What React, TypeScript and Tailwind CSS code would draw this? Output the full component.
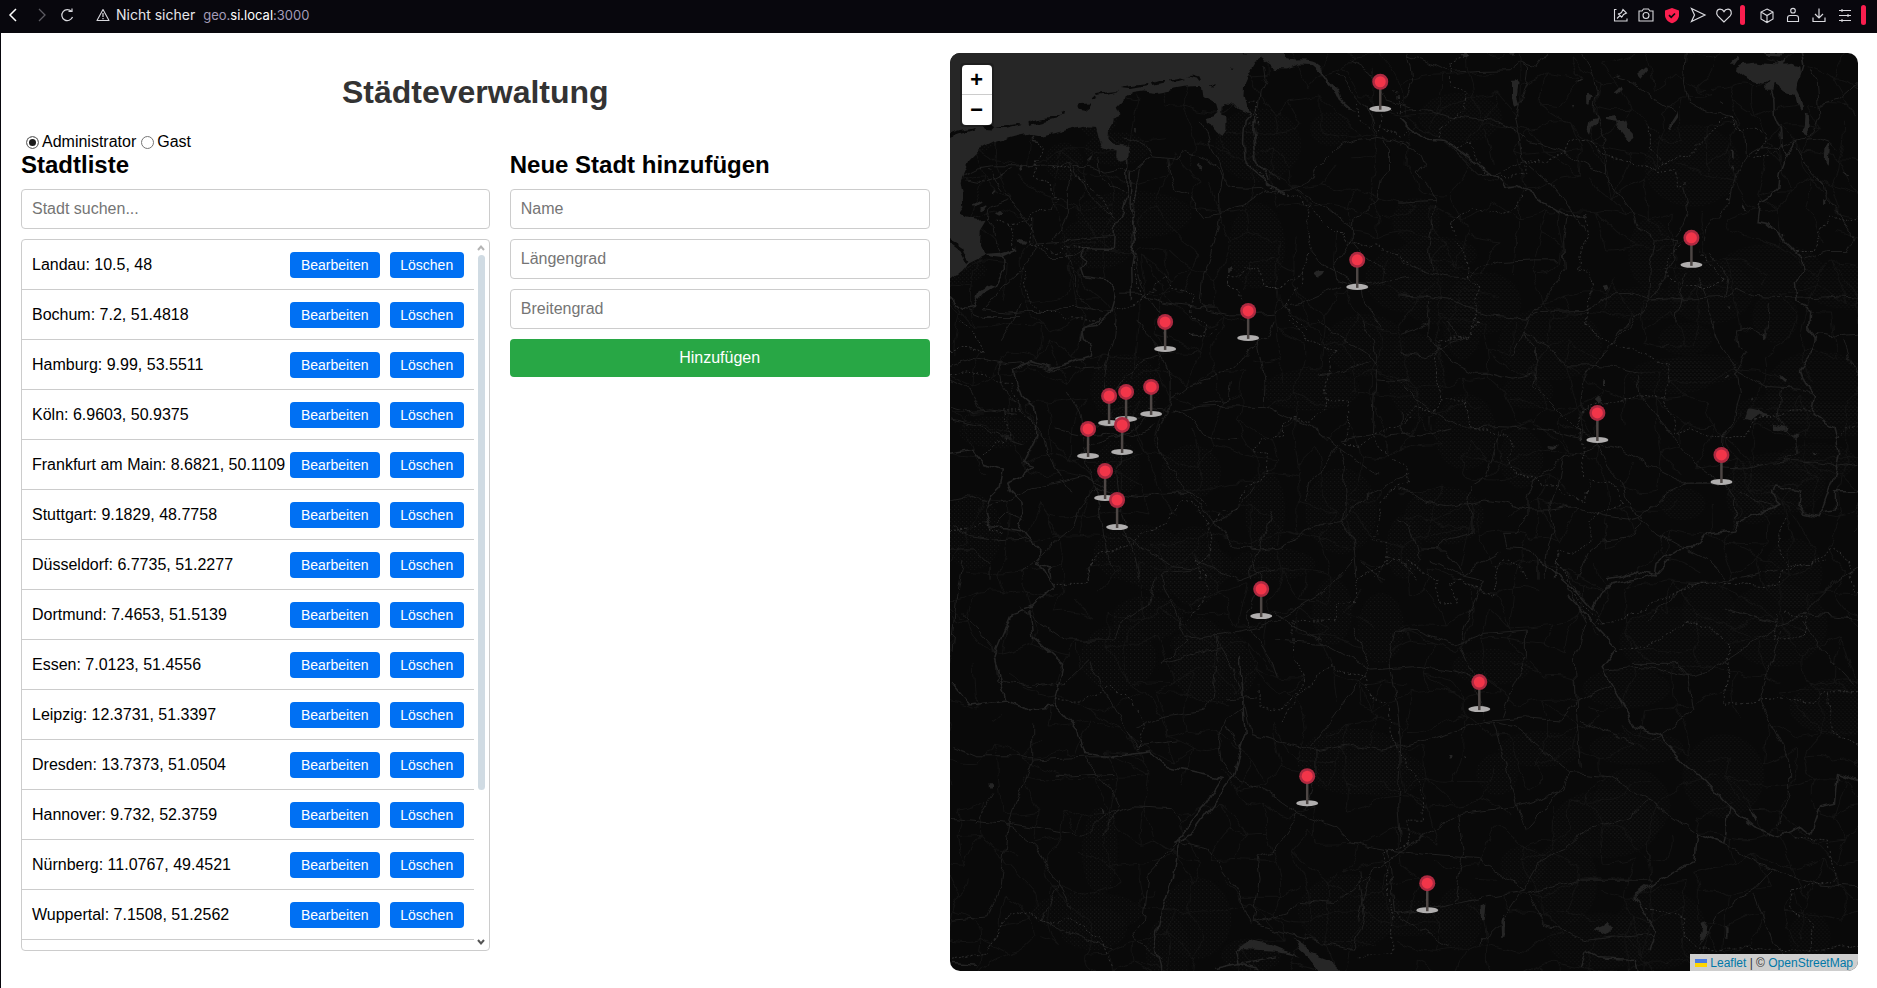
import React, { useState } from "react";

interface City {
  name: string;
  lng: number;
  lat: number;
}

const CITIES: City[] = [
  { name: "Landau", lng: 10.5, lat: 48 },
  { name: "Bochum", lng: 7.2, lat: 51.4818 },
  { name: "Hamburg", lng: 9.99, lat: 53.5511 },
  { name: "Köln", lng: 6.9603, lat: 50.9375 },
  { name: "Frankfurt am Main", lng: 8.6821, lat: 50.1109 },
  { name: "Stuttgart", lng: 9.1829, lat: 48.7758 },
  { name: "Düsseldorf", lng: 6.7735, lat: 51.2277 },
  { name: "Dortmund", lng: 7.4653, lat: 51.5139 },
  { name: "Essen", lng: 7.0123, lat: 51.4556 },
  { name: "Leipzig", lng: 12.3731, lat: 51.3397 },
  { name: "Dresden", lng: 13.7373, lat: 51.0504 },
  { name: "Hannover", lng: 9.732, lat: 52.3759 },
  { name: "Nürnberg", lng: 11.0767, lat: 49.4521 },
  { name: "Wuppertal", lng: 7.1508, lat: 51.2562 },
];

// Foot of every pin on the map canvas, north to south so that southern pins lie on top
const PINS: [number, number][] = [
  [430, 56],
  [741, 212],
  [407, 234],
  [298, 285],
  [215, 296],
  [201, 361],
  [176, 366],
  [159, 370],
  [647, 387],
  [172, 399],
  [138, 403],
  [771, 429],
  [155, 445],
  [167, 474],
  [311, 563],
  [529, 656],
  [357, 750],
  [477, 857],
];

// Small deterministic generator so the side roads are the same on every load
const createRandom = (seed: number) => {
  let state = seed;
  return () => {
    state = (state * 16807) % 2147483647;
    return state / 2147483647;
  };
};

const buildSideRoads = () => {
  const random = createRandom(4711);
  const step = 27;
  const cols = 36;
  const rows = 36;
  const nodes: number[][][] = [];
  for (let r = 0; r < rows; r++) {
    nodes.push([]);
    for (let c = 0; c < cols; c++) {
      nodes[r].push([(c + random() * 0.9 - 0.5) * step, (r + random() * 0.9 - 0.5) * step]);
    }
  }
  let d = "";
  const connect = (a: number[], b: number[]) => {
    const mx = (a[0] + b[0]) / 2 + (random() - 0.5) * 12;
    const my = (a[1] + b[1]) / 2 + (random() - 0.5) * 12;
    d += `M${a[0].toFixed(0)} ${a[1].toFixed(0)}Q${mx.toFixed(0)} ${my.toFixed(0)} ${b[0].toFixed(0)} ${b[1].toFixed(0)}`;
  };
  for (let r = 0; r < rows - 1; r++) {
    for (let c = 0; c < cols - 1; c++) {
      if (random() < 0.6) connect(nodes[r][c], nodes[r][c + 1]);
      if (random() < 0.6) connect(nodes[r][c], nodes[r + 1][c]);
      if (random() < 0.12) connect(nodes[r][c], nodes[r + 1][c + 1]);
    }
  }
  return d;
};

const buildForests = () => {
  const random = createRandom(99);
  return Array.from({ length: 90 }, () => ({
    cx: Math.round(random() * 908),
    cy: Math.round(60 + random() * 850),
    rx: Math.round(18 + random() * 40),
    ry: Math.round(14 + random() * 30),
  }));
};

const SIDE_ROADS = buildSideRoads();
const FORESTS = buildForests();

interface MapRegion {
  transform: string;
  water?: string;
  land?: string;
  roads: string;
  rivers: string;
  borders: string;
}

const REGIONS: MapRegion[] = [
  // north-west
  {
    transform: "translate(-10 -13) scale(.3333)",
    water:
      "M10 20H1027L1042 58L1075 62Q1120 60 1140 78L1165 120L1192 150L1200 180L1230 206L1256 213L1225 210L1195 182L1180 150L1160 125L1140 95L1118 76L1075 74L1040 86L1000 85L965 60L945 66L925 100L912 130L910 165L918 200L932 220L918 219L890 208L875 192L857 187L845 200L843 228L862 232V265L845 287L825 270L820 262L800 250L797 235L820 230L832 220L825 195L790 175L785 142L740 143L690 152L650 160L610 155L580 160L550 180L530 200L541 225L515 235L510 270L508 300L520 315L572 318L566 352L545 360L525 350L527 335L490 322L475 300L465 262L430 258L390 268L315 287L275 280L225 290L170 305L120 330L85 365L70 400L62 430L68 460L70 500L56 520L75 535L110 543L140 540L122 570L120 615L135 645L85 670L65 695L10 735ZM135 645L180 642L232 626L232 632L190 652L188 658L140 652ZM165 518L180 507L190 516L178 525ZM92 500L122 485L126 491L98 507ZM120 507L135 499L138 508L126 514ZM238 375H246L250 398L242 394ZM157 458L166 447L169 452L160 461ZM232 605L245 598L260 606L250 615L236 612ZM776 378L782 372L787 379L780 384ZM864 682L870 678L876 688L870 697L864 694ZM1127 708L1140 697L1155 699L1150 708L1136 717ZM106 772L112 755L150 733L165 738L125 762L114 775ZM438 360L448 350L450 354L441 364ZM582 265L587 264L587 279L583 277Z",
    land:
      "M10 302V288L60 274L105 265L100 271L60 283ZM125 260L145 255L160 262L150 272L132 271ZM165 264L230 253L245 255L200 266ZM265 251L280 242L330 235L362 230L350 238L300 250L268 259ZM360 220L372 216L370 228L362 228ZM410 193L425 190L455 188L450 198L435 210L415 206ZM455 175L465 170L475 178L465 181ZM468 163L500 157L535 153L500 163L470 169ZM542 145L575 138L620 133L625 138L570 148ZM632 128L655 121L680 121L675 128L650 132L635 136ZM690 119L720 113L735 118L715 124L692 125ZM738 106L760 105L778 110L783 122L778 124L770 113ZM812 140L824 136L820 144ZM870 86L880 87L876 91ZM910 43L918 45L914 48ZM20 590L60 610L72 640L88 660L80 668L62 632L20 600Z",
    roads:
      "M70 405L110 385L155 378L240 378L310 376L350 378L385 368L400 380L450 380L495 400L545 388L580 395M75 420L130 430L180 405L215 385M145 385L170 425L205 470L235 510L270 560L286 605L275 650L245 690L190 740L130 810M205 480L150 500L145 535L165 570L175 620L185 655M385 368L400 410L385 450L385 520L365 560L340 600M400 380L440 460L480 500L524 535M280 610L360 605L440 596L520 590M275 610L330 650L400 650L430 630M580 395L640 348L700 355L740 338L790 358L840 390L850 415L875 440L920 442L960 440M548 298L590 305L620 320L640 348M640 348L600 380L590 430L580 520L578 600L595 700L620 775M777 240L800 275L815 330L840 375L850 400L838 460L840 520L835 560L815 640L790 710L783 790L800 810M680 355L685 400L710 450L740 460L790 530L840 525L880 500L920 490L975 455L1040 445L1070 445L1110 425L1130 385L1185 330L1245 303L1310 293L1360 300L1410 320M1330 290L1345 330L1345 390L1320 420L1310 480L1270 520L1238 540L1236 600M1070 455L1120 480L1160 505L1210 545L1234 565M960 440L1000 460L1040 445M970 80L975 120L960 150L955 200L940 260L945 320L960 380L1020 420M1195 100L1240 160L1280 200L1300 250L1310 290M1230 60L1290 95L1340 180L1410 205M1234 605L1270 650L1310 670L1340 700M1110 635L1140 670L1190 700L1240 730L1290 735L1350 720L1410 712M800 810L870 825L930 825L1000 820L1040 800L1080 790L1150 760L1200 740M620 775L670 790L770 803L830 805M620 775L660 830L670 860L680 900M540 760L600 760L620 775M130 810L200 820L260 815L320 815L370 800L420 800L490 815L520 810M30 770L70 805L130 830L240 830M1236 600L1210 640L1180 680L1190 720L1240 735M1260 740L1270 790L1300 830L1330 870M240 790L220 840L180 900M380 640L400 700L410 760L460 810M470 350L475 400L510 440L560 455",
    rivers:
      "M566 352V380L560 400L562 470L545 520L524 550L520 632L430 630L425 650L440 662L422 685L430 710L500 720L520 745L525 770L515 805L500 830L465 860L430 865L420 900M574 395L570 500L585 600L572 680L574 780M932 220L915 240L910 300L915 370L960 410L1000 440L1040 455M940 225L938 280L950 360L990 420M188 658L190 690L165 740M30 770L70 805L100 800L112 770M277 285L280 305L297 308",
    borders:
      "M297 308L310 330L290 370L280 410L330 430L335 460L350 480L330 510L300 505L260 540L210 555L165 540M205 555L225 630M275 540L265 610L300 615L340 640L380 620L440 632M340 385L360 375L390 390L420 420L460 450L490 480L510 520L518 545M590 440L575 520L585 600L580 680L600 760L610 775L570 800L520 810M615 775L665 720L680 705L695 740L770 765L750 800L755 830L800 850L780 890L750 880M905 790L895 745L862 735L863 710L905 712L915 688L960 685L972 740L1030 740L1080 700L1085 730L1050 770L1040 800L1060 830L1100 870M1080 700L1110 630L1100 560L1105 495L1040 460L990 440L960 400L920 370M1105 495L1140 535L1180 575L1210 575L1220 605L1310 620L1350 640L1410 665M1255 190L1260 240L1300 275L1320 265L1330 210L1380 220L1370 170L1350 150M1330 265L1380 290L1410 270M925 190H952V250H925M250 690L265 780L300 815L350 815L370 840L430 840L480 840",
  },
  // north-east
  {
    transform: "translate(450 -13) scale(.3333)",
    water:
      "M1002 88L1030 73L1070 68L1100 72L1145 75L1170 72L1200 80L1203 118L1188 125L1185 150L1200 180L1205 200L1200 220L1190 200L1180 165L1155 158L1140 145L1120 132L1115 150L1097 150L1098 135L1105 122L1090 132L1060 125L1030 110ZM985 75L1000 60L1012 45L1020 55L1005 75ZM1085 39H1160L1140 50L1100 48ZM1130 72L1148 60L1145 78ZM1212 225L1225 228L1228 260L1216 285L1200 275L1210 262ZM335 125L348 110L355 130L350 165L358 190L340 195L335 165ZM180 45L195 42L205 50L190 58ZM325 39H350L338 52ZM710 105L738 82L740 92L720 117ZM645 160L668 140L670 150L652 166ZM610 238L650 232L655 245L675 240L680 255L700 275L702 295L685 308L670 290L655 270L658 250L615 244ZM565 270L572 235L590 230L585 255L578 262L572 282ZM830 217L832 230L808 265L803 260ZM1273 360L1275 325L1285 308L1288 330L1285 372ZM1320 397L1345 408L1335 410ZM994 330H1000V355L995 350ZM995 380L1002 372L1000 395ZM970 480L980 474L985 480L975 486ZM1028 490L1040 503L1038 510L1028 500ZM607 738L620 735L624 745L614 754ZM958 178L970 185L965 189ZM563 165L578 170L570 195H564ZM520 192L528 195L524 204ZM1268 480L1273 475L1275 492L1268 500ZM530 120L548 117L535 125ZM980 800L990 800L988 808ZM1150 585L1145 592L1142 586ZM645 105L658 104L650 111Z",
    roads:
      "M20 39L30 80L35 130L20 170L0 190M0 215L80 210L160 230L230 240L295 245L355 275L390 305L440 320L490 335L530 360L575 385L612 405L650 455L695 515L710 560L765 600L830 602M550 45L575 100L590 150L580 210L600 270L618 305L614 340L612 405M355 275L345 230L358 185L380 130L385 80L360 65L330 90L240 92L150 98L70 60L20 45M360 65L410 80L440 39M858 39L852 130L865 190L900 210L960 225L1000 240L1030 275L1035 350L1010 400L995 440L985 490L950 530L920 560L912 600M1035 350L1080 325L1150 318L1200 300L1250 295L1290 310L1310 330M1260 200L1320 180L1374 130M1230 85L1250 120L1255 180L1258 230L1240 275L1205 300M1190 320L1220 380L1250 415L1270 435L1275 475L1310 510L1340 560L1358 600L1340 635L1280 635L1215 655M355 275L365 360L400 390L450 430L500 490L550 570M0 315L60 350L70 375L50 400L85 430L105 480L95 570L85 630L95 690M370 365L300 400L240 405L180 345L140 305M105 485L0 490M0 660L60 690L140 710L200 715L240 680L300 665L400 660L480 660M500 530L490 600L495 690L450 760L420 790L390 830L370 890M0 765L80 770L160 780L220 810L270 825L380 835L420 815L550 812L580 800L640 762L700 760L750 780L850 775L970 770L1010 745L1060 770L1200 775L1300 770L1374 775M750 780L720 820L690 860L660 890M765 600L750 680L745 775M832 600L820 660L790 720L750 775M920 640L960 680L980 715L970 770M850 440L865 520L850 560L825 590M860 690L850 740L835 790L830 850M890 710L920 780L935 850L950 899M640 110L700 125L760 175L830 218M85 780L80 850L0 880M1110 790L1105 840L1095 899",
    rivers:
      "M1110 150L1120 180L1122 225L1140 270L1145 320L1158 350L1140 400L1135 440L1110 465L1078 485L1070 545L1095 550L1150 600L1205 655L1208 690L1185 730L1190 790L1228 810L1225 860L1245 899M1200 25L1210 80L1198 120M1190 305L1160 350M0 235L30 265L80 298L130 302L170 325L240 380L290 410L310 440L345 435L400 465L440 495L490 525L550 530",
    borders:
      "M200 50L150 70L150 140L200 155L195 210L160 235L120 265L110 295M140 310L170 325L205 312L230 360L260 400L320 415L370 405L372 365L430 370L495 335L500 300L570 308L620 350L680 360L710 380L770 385L830 345L870 350L890 320L930 280L960 245L990 235L1010 265L1100 275L1100 300L1060 350L1110 350L1135 322M770 395L820 390L835 440L862 430M375 455L350 510L300 522L220 510L150 545L160 600L200 650L205 710L235 750L220 780L235 850L205 895L130 899M495 525L550 525L560 590L540 640L535 690L575 700L570 790L555 850L595 899M840 620L800 660L800 720L870 740L940 740L970 720L925 670L900 630M1205 655L1190 635L1235 635L1260 570L1290 520L1330 545L1374 525M750 260L750 330L790 370",
  },
  // west
  {
    transform: "translate(-10 267) scale(.3333)",
    roads:
      "M30 140L100 115L200 135L260 130L340 150L400 145L490 140M590 0L620 40L650 70L665 110L690 170L690 240L680 280L650 340L660 400L690 450L730 500L775 550L820 610L855 640L880 680L960 690L1010 685L1090 640L1150 610L1205 605L1230 570L1290 520L1350 490L1410 460M525 0L520 60L500 130L490 200M500 255L555 170L610 125L665 110M690 240L740 200L810 175L880 145L930 90L980 50L1000 0M620 265L720 275L780 262L880 258L975 260L1060 300L1110 320L1160 355L1200 385L1300 460L1320 465M950 50L965 120L975 190L972 260M870 180L865 240L795 255M700 270L760 300L790 345L840 360L900 355M1200 370L1180 400L1150 450L1110 480L1095 550M1205 360L1290 345L1350 345L1410 335M1130 0L1200 50L1280 100L1310 140L1305 220L1300 340M1310 140L1300 60L1265 0M1130 165L1200 155L1285 125M1200 390L1215 440L1210 500L1215 560L1205 600L1240 660L1250 770M1410 180L1370 185L1310 180M995 580L970 640L960 690L930 740L935 779M820 610L900 560L940 500M180 130L190 200L240 270L300 330L320 400L350 450L390 520M140 560L200 545L280 500L340 490L430 470L490 500M380 210L420 280L430 350L440 430L460 490L480 560L490 640L500 700L530 760M440 310L500 320L560 310L640 275M350 330L420 345L500 340L580 350L640 320M460 500L520 520L600 530L650 520L760 520L800 560M550 400L530 460L540 560L560 640L580 700L600 779M410 410L460 370L520 350L570 340L620 290M30 260L90 275L150 270L230 280M30 300L120 320L190 350L250 370M40 620L90 650L160 660L250 655L290 670M30 690L100 690L150 740L150 779M160 620L200 580L250 600M30 540L80 530L140 545M550 640L620 690L700 740L780 750M470 500L420 560L400 620L330 680L240 760M30 180L90 210L120 270",
    rivers:
      "M480 0L425 30L430 55L455 85L450 110L390 130L340 145L270 125L220 150L230 190L245 230L280 260L290 310L290 350L270 390L250 430L280 440L235 475L200 490L210 515L245 550L250 580L230 610L260 640L300 690L290 730L330 740L335 779M30 400L95 388L130 430L190 450L180 500L150 530L135 570L150 620L210 625L250 630",
    borders:
      "M30 95L90 80L130 100L100 40L60 0M30 165L80 150L140 160L180 190L210 190L240 270L190 270L210 350L160 380L130 410M30 635L90 630L140 600L150 630L190 640M440 779L450 740L480 700L560 680L610 640L680 610L710 560L725 540L770 560L820 640L810 700L775 740L780 779M820 610L850 570L890 575L920 500L980 465L985 400L935 395L960 360L1030 345L1030 310L1060 295L1110 310L1150 280L1155 220L1170 120L1190 90L1100 60L1050 0M1155 235L1220 240L1230 300L1220 340L1210 370L1260 380L1300 350L1330 400L1400 440L1405 490L1340 520L1320 560L1310 640L1295 665L1340 665L1340 720L1300 779M1410 300L1340 330L1290 345M750 40L800 50L830 20M1340 710L1410 740",
  },
  // east
  {
    transform: "translate(450 267) scale(.3333)",
    water:
      "M1032 300L1045 265L1070 270L1090 285L1110 290L1090 295L1070 290L1050 305L1035 300ZM1120 310L1145 320L1168 325L1160 335L1125 325ZM1142 165L1160 180L1155 190L1142 178ZM968 172L985 162L990 170ZM1050 235L1060 228L1055 243ZM1175 345L1195 350L1185 360ZM438 372L465 375L465 386L445 382ZM583 240L595 230L608 242L595 252ZM1237 395L1255 397L1245 401ZM1088 40L1096 38L1094 62H1088ZM608 182L614 180V195H608Z",
    roads:
      "M80 0L80 50L105 80L160 130L220 160L270 160L330 178L400 165M370 40L340 100L330 105M370 40L405 80L408 160L400 200L440 240L490 290L540 340L590 360M370 40L440 75L470 110L500 135L560 135L640 140L720 160M690 0L640 70L590 125L555 170L545 240L545 330L540 360M940 0L945 50L970 90L1010 150L1060 180L1100 200L1200 205L1235 220M1010 150L1040 100L1010 80L1005 40L1060 25L1090 40M1010 155L1020 220L1000 300L965 350L960 430M0 190L40 230L110 280L180 325L300 320L380 325L450 335L540 355M0 270L0 340L60 345L150 320M300 330L280 400L260 470L210 500L200 550L215 580L215 640L130 660L110 690L80 690M0 510L40 520L80 550L140 560L250 540L320 550L380 570L450 570L520 560L610 590L680 600L720 590L800 520L860 490L960 490M600 370L650 385L700 405L750 440L850 490L920 488M960 490L890 440L840 380L780 300L720 230L710 165M960 440L1040 445L1110 430L1180 425L1250 430L1300 440L1374 430M970 490L1005 540L1005 600M590 370L620 440L660 480L680 540L690 570L730 590M590 380L540 400L490 410L460 440L400 480L380 530L380 590L340 640L310 640L320 680L390 685L410 720L410 779M490 410L475 480L445 560L460 620L440 700L430 779M730 595L690 650L610 660L560 700L530 779M0 600L30 620L50 680L60 720M60 690L130 690L190 765L240 730L300 700M720 590L770 640L860 690L920 720L980 779M1150 430L1190 400L1180 350L1150 320L1130 290L1140 210M1240 40L1320 50L1374 45M1330 60L1350 120L1370 165M140 0L180 60M0 100L80 110L150 70L210 50M1010 510L1060 540L1130 560",
    rivers:
      "M1228 0L1225 30L1242 50L1230 110L1200 150L1215 190L1245 230L1235 280L1300 320L1318 400L1300 480L1270 560L1255 590L1210 580L1190 550L1195 510L1120 495L1110 520L1145 550L1100 570L1010 610L1000 630L920 640L880 685L830 690L770 730L765 765L710 750L670 770L620 779M1270 575L1305 570L1305 515L1374 515",
    borders:
      "M230 0L210 50L110 60L110 100L105 170L130 240L190 240L210 320L280 340L320 345L345 385L320 410L345 470L410 470L420 495L470 490L485 520L550 540L570 480L630 490L665 550L620 570L560 600L575 660L520 700L470 690L465 779M555 5L600 60L650 75L700 85L800 135L808 200L790 235L720 225L660 245L600 250L545 270L530 320L545 380L550 470M790 240L820 300L825 345L870 320L930 350L1040 350L1060 300L1130 290L1170 270L1235 270M1160 600L1135 640L1140 700L1165 735L1210 740L1260 710L1300 685L1345 720L1350 779M0 310L45 265L110 270L130 240M285 740L320 720L360 740L380 779M1310 350L1340 325L1374 315M0 720L50 779",
  },
  // south
  {
    transform: "translate(-10 507) scale(.598 .3333)",
    water:
      "M590 1132L605 1150L620 1180L650 1200L680 1250H640L615 1190L600 1165ZM905 1035L915 1030L912 1080H906ZM935 1075L943 1060L942 1130H936ZM1095 1110L1110 1100L1115 1085L1125 1105L1112 1125ZM1275 1085L1282 1080L1278 1140L1270 1145ZM1314 1095H1318V1130H1314ZM495 1170L520 1140L560 1160L600 1190L560 1175L510 1170ZM1350 740L1365 770L1360 780ZM850 585H853V595H848ZM86 672H92V685H87ZM267 740L273 750L269 765ZM877 588L884 592L880 596Z",
    roads:
      "M40 0L30 100L20 270M40 160L90 260L95 360L155 380M155 490L155 600L115 790L100 980M155 600L250 590L290 590M20 560L60 590L155 590M20 775L115 790L240 825L270 770L320 740L385 745L400 790M130 140L210 240L290 240L300 190L350 130L360 50M410 230L380 100L370 40L420 30M410 235L480 220L530 200L570 175L640 100L690 0M460 220L490 330L510 440L520 520L630 575L690 555L740 570L770 560L830 530L900 490L920 480M640 240L590 200L560 160M415 240L370 310L470 260M465 230L455 415L440 450L370 470L330 500M510 440L480 480L465 540L470 600L490 650L560 710L600 760L660 800L690 850L750 870L820 885L900 895L975 990M630 575L630 640L610 750M560 240L640 250L720 330L790 320L860 335L910 360M760 210L750 310L765 450L770 560L765 740L770 850M760 210L800 215L860 255L910 220L980 210M690 200L720 320L620 560M870 250L880 180L910 60L860 40L820 0M870 260L890 340L910 480L960 500L1010 570L1055 640L1040 690L960 740L870 760L770 870L720 940L700 1080M920 480L980 470L1040 480L1060 430L1120 380M980 210L980 290L960 370L940 470M925 490L950 640L980 810L1010 750L1050 650M1055 640L1120 650L1185 720L1150 770L1080 810L1050 860L1000 910L975 990M1185 720L1265 820M975 990L860 1030L760 1060M980 1000L1070 960L1190 960M970 1000L940 1080L900 1150M985 1005L1010 1090L1080 1140L1130 1130L1190 1120M1065 490L1070 620M1065 490L1060 300L1080 190L1050 80M1180 180L1250 70L1300 70L1400 30M1110 330L1180 320L1250 350L1290 330L1400 200L1440 160L1536 175M1400 190L1310 150M1440 180L1470 260L1525 370M1405 210L1370 420L1420 600L1420 700L1400 800M1250 345L1260 450L1190 540M480 420L530 410M250 300L210 370L160 380M250 310L290 440L330 560L400 545M240 590L290 700L300 740L270 830M190 650L290 640M110 790L160 860L190 950L220 1040M200 960L170 1080L290 1170M400 840L350 940L340 1080L320 1130L370 1200M600 760L560 870L530 890L535 960L525 1090L580 1060L600 1020L660 1030L720 940M700 930L710 1080L690 1170L560 1110L525 1090M400 850L450 870L500 1000L520 1090M750 870L760 1060L850 1160M865 760L875 880L860 1020M1360 990L1390 930L1460 970L1536 980M1360 990L1300 1060L1270 1160M1400 940L1320 860L1265 820M1360 1000L1390 1140L1420 1200M1250 350L1230 310L1160 310M100 980L80 1070L20 1080M1030 0L1060 80L1110 190M700 0L740 60M520 0L540 50L510 180L550 290L560 350M90 700L60 790M430 0L500 60L560 20M480 500L500 560M1450 150L1500 60L1536 20M1320 150L1390 190M1160 550L1070 480",
    rivers:
      "M165 0L190 80L155 140L120 160L90 290L110 420L50 435L20 370M150 150L155 230L205 310L190 430L230 510L240 580L290 590L350 575L380 620L470 655L440 740L400 830L390 960L370 1050L360 1160L370 1232M110 420L150 450L190 440M500 290L510 520L490 650L420 820L390 850M1000 0L1060 90L1090 150M1050 110L1130 260L1105 320L1130 400L1160 500L1200 520L1250 620L1280 660L1320 740L1310 850L1265 820L1260 900L1200 960L1160 1010L1195 1110L1185 1170M1090 150L1110 80L1200 40L1220 0M1320 740L1360 800L1400 830L1440 800L1455 820L1470 740L1495 730L1500 640L1536 665M20 1210L60 1215M460 1225L500 1210L530 1225M1070 1220L1080 1170L1100 1190L1160 1195L1165 1232M495 1170L500 1210L560 1190",
    borders:
      "M255 0L245 70L190 70L190 75M190 420L240 420L285 380L325 430L340 500L330 570M430 0L450 90L430 150L405 190M760 0L700 50L695 120L665 130L660 185L590 180L590 270L610 370L570 450L535 440L535 380M570 480L600 400L650 320L710 350L720 410L750 430L755 530L780 620L805 680L808 780L780 780L785 850L740 880L755 1050L755 1180L700 1190M780 0L830 60L835 130L865 125L850 70L870 60L925 110L935 20M1030 0L1070 130L1105 190L1150 170L1260 70L1330 70L1400 80L1410 30L1480 0M1130 265L1180 260L1245 190L1270 190L1320 250L1310 430L1400 415L1460 430L1475 395L1536 395M1485 400L1490 520L1536 555M1520 0L1525 90L1536 95M1430 830L1485 840L1495 960L1420 990L1425 1060L1460 1090L1455 1170L1536 1155M1400 160L1395 240L1440 230L1450 170L1410 155M1180 1045L1245 1070L1240 1130L1270 1170L1350 1165L1455 1170M80 1170L120 1050L190 1090L215 1070L270 1140L290 1232M20 1200L80 1180",
  },
];

const NavIcon: React.FC<{ children: React.ReactNode; label: string; color?: string }> = ({
  children,
  label,
  color = "#d9d9de",
}) => (
  <button type="button" aria-label={label} className="flex h-6 w-[26px] items-center justify-center">
    <svg width="18" height="18" viewBox="0 0 18 18" fill="none" stroke={color}>
      {children}
    </svg>
  </button>
);

const BrowserBar: React.FC = () => (
  <header className="flex h-[33px] shrink-0 items-center bg-[#08070d] pb-[3px] pr-[11px] font-[Inter,sans-serif] text-[14px] leading-5 text-[#e6e6ea]">
    <NavIcon label="Zurück" color="#ffffff">
      <path d="M12 3L6 9L12 15" strokeWidth="1.5" />
    </NavIcon>
    <div className="ml-[3px]">
      <NavIcon label="Vor" color="#5c5b62">
        <path d="M6 3L12 9L6 15" strokeWidth="1.3" />
      </NavIcon>
    </div>
    <NavIcon label="Neu laden">
      <path d="M12.5 5.5A5.5 5.5 0 1 0 13.5 11M9.5 5.5H13V2.5" strokeWidth="1.2" />
    </NavIcon>
    <div className="ml-[9px] flex items-center">
      <NavIcon label="Websiteinformationen">
        <path d="M9 3.5L15 14.5H3Z" strokeWidth="1.1" strokeLinejoin="round" />
        <path d="M9 7V11M9 12V13.2" strokeWidth="1.2" />
      </NavIcon>
      <span>Nicht sicher</span>
      <span className="ml-2 text-[13px] text-[#a49bb8]">
        geo.<span className="text-white">si.local</span>:3000
      </span>
    </div>

    <div className="ml-auto flex items-center">
      <NavIcon label="Anheften">
        <path d="M5.5 3.5H3.5V15H16V12.5M6 12.5L9 9.5M7 7.5L11 11.5M8 8L10.5 6.5L12 3.5L15.5 7L12.5 8.5L11 11" strokeWidth="1.1" />
      </NavIcon>
      <NavIcon label="Schnappschuss">
        <path d="M2 5H5L6.5 3H11.5L13 5H16V15H2Z" strokeWidth="1.1" />
        <circle cx="9" cy="9.5" r="3" strokeWidth="1.1" />
      </NavIcon>
      <NavIcon label="Werbeblocker">
        <path d="M9 2L16 4.5V9C16 13 13 16 9 17.3C5 16 2 13 2 9V4.5Z" fill="#fa1e4e" stroke="none" />
        <path d="M6 9.2L8.2 11.4L12 7.5" stroke="#08070d" strokeWidth="1.7" />
      </NavIcon>
      <NavIcon label="Flow">
        <path d="M2.5 2.5L16 9L2.5 15.5L5.5 9Z" strokeWidth="1.2" />
      </NavIcon>
      <NavIcon label="Favoriten">
        <path d="M9 16L2.8 9.8C.6 7.4 1.8 3.2 5 3.2C7 3.2 8.3 4.3 9 5.6C9.7 4.3 11 3.2 13 3.2C16.2 3.2 17.4 7.4 15.2 9.8Z" strokeWidth="1.2" />
      </NavIcon>
      <span className="ml-[3px] h-5 w-[5px] rounded-sm bg-[#fa1e4e]" />
      <div className="ml-[9px] flex">
        <NavIcon label="Erweiterungen">
          <path d="M9 3L15 6V13L9 16.5L3 13V6ZM3 6L9 9.5L15 6M9 9.5V16" strokeWidth="1.1" />
        </NavIcon>
        <NavIcon label="Profil">
          <circle cx="9" cy="4.7" r="2.3" strokeWidth="1.1" />
          <path d="M3.5 15.5V12Q3.5 9.5 6 9.5H12Q14.5 9.5 14.5 12V15.5Z" strokeWidth="1.1" />
        </NavIcon>
        <NavIcon label="Downloads">
          <path d="M9 2.5V12M5 8L9 12L13 8M3 11.5V15.5H15V11.5" strokeWidth="1.2" />
        </NavIcon>
        <NavIcon label="Einfache Einrichtung">
          <path d="M3 4.5H15M3 9.5H15M3 14.5H15M6 3V6M12 8V11M6 13V16" strokeWidth="1.1" />
        </NavIcon>
      </div>
      <span className="ml-[3px] h-5 w-[5px] rounded-sm bg-[#fa1e4e]" />
    </div>
  </header>
);

const CityList: React.FC = () => (
  <div className="flex min-h-0 flex-1 overflow-hidden rounded border border-[#ccc]">
    <ul className="min-w-0 flex-1 overflow-y-auto [scrollbar-width:none]">
      {CITIES.map((city) => (
        <li key={city.name} className="flex h-[50px] items-center justify-between border-b border-[#ccc] px-[10px]">
          <span className="whitespace-nowrap">
            {city.name}: {city.lng}, {city.lat}
          </span>
          <div className="flex gap-[10px] text-[14px] leading-4 text-white">
            <button type="button" className="w-[90px] rounded bg-[#0070f3] py-[5px]">
              Bearbeiten
            </button>
            <button type="button" className="w-[74px] rounded bg-[#0070f3] py-[5px]">
              Löschen
            </button>
          </div>
        </li>
      ))}
    </ul>
    {/* Scroll track */}
    <div className="flex w-[15px] shrink-0 flex-col items-center py-1" aria-hidden="true">
      <svg width="8" height="8" viewBox="0 0 8 8" fill="none" stroke="#b4b4b4" strokeWidth="2">
        <path d="M1 6L4 2.5L7 6" />
      </svg>
      <div className="mt-[3px] h-[535px] w-[7px] rounded-full bg-[#d0dbe3]" />
      <svg className="mt-auto" width="8" height="8" viewBox="0 0 8 8" fill="none" stroke="#555" strokeWidth="2">
        <path d="M1 2L4 5.5L7 2" />
      </svg>
    </div>
  </div>
);

const inputClass =
  "h-10 w-full rounded border border-[#ccc] px-[10px] text-[16px] placeholder:text-[#757575] focus:outline-none";

const radioClass =
  "h-[13px] w-[13px] appearance-none rounded-full border border-[#767676] checked:bg-[#1a1a1a] checked:shadow-[inset_0_0_0_2px_white]";

const CityForm: React.FC = () => (
  <form className="flex flex-col gap-[10px]" onSubmit={(e) => e.preventDefault()}>
    <input type="text" placeholder="Name" aria-label="Name" className={inputClass} />
    <input type="text" placeholder="Längengrad" aria-label="Längengrad" className={inputClass} />
    <input type="text" placeholder="Breitengrad" aria-label="Breitengrad" className={inputClass} />
    <button type="submit" className="h-[38px] rounded bg-[#28a745] text-white">
      Hinzufügen
    </button>
  </form>
);

const CityMap: React.FC = () => (
  <section aria-label="Karte" className="relative min-w-0 flex-1 overflow-hidden rounded-[10px] bg-[#090909]">
    <svg
      className="absolute inset-0 h-full w-full"
      viewBox="0 0 908 918"
      preserveAspectRatio="xMidYMid slice"
      fill="none"
      strokeLinejoin="round"
    >
      <defs>
        <pattern id="forest" width="4" height="4" patternUnits="userSpaceOnUse">
          <rect width="1" height="1" fill="#171717" />
          <rect x="2" y="2" width="1" height="1" fill="#171717" />
        </pattern>
        {/* Makes coast lines, rivers and roads meander */}
        <filter
          id="meander"
          x="0"
          y="0"
          width="908"
          height="918"
          filterUnits="userSpaceOnUse"
          colorInterpolationFilters="sRGB"
        >
          <feTurbulence type="fractalNoise" baseFrequency="0.07" numOctaves="2" seed="3" />
          <feDisplacementMap in="SourceGraphic" scale="9" xChannelSelector="R" yChannelSelector="G" />
        </filter>
      </defs>
      {FORESTS.map((forest, i) => (
        <ellipse key={i} {...forest} fill="url(#forest)" />
      ))}
      <g filter="url(#meander)">
        <path d={SIDE_ROADS} stroke="#141414" />
        {REGIONS.map((region) => (
          <g key={region.transform} transform={region.transform}>
            {region.water && <path d={region.water} fill="#262626" />}
            {region.land && <path d={region.land} fill="#090909" />}
            <path d={region.roads} stroke="#202020" strokeWidth="1" vectorEffect="non-scaling-stroke" />
            <path d={region.rivers} stroke="#252525" strokeWidth="1.5" vectorEffect="non-scaling-stroke" />
            <path
              d={region.borders}
              stroke="#303030"
              strokeWidth="1"
              strokeDasharray="2 2"
              vectorEffect="non-scaling-stroke"
            />
          </g>
        ))}
      </g>
      {PINS.map(([x, y]) => (
        <g key={`${x}-${y}`} transform={`translate(${x} ${y})`}>
          <ellipse rx="11" ry="3" fill="#b0aeae" />
          <path d="M0 -20V1" stroke="#4d4644" strokeWidth="2.5" />
          <circle cy="-27" r="8" fill="#ad2a41" />
          <circle cy="-27" r="5.5" fill="#f23549" />
        </g>
      ))}
    </svg>

    <div className="absolute left-[10px] top-[10px] flex flex-col rounded border-2 border-black/20 bg-clip-padding font-['Liberation_Mono',monospace] text-[22px] font-bold text-black">
      <button
        type="button"
        aria-label="Zoom in"
        className="h-[30px] w-[30px] rounded-t-sm border-b border-[#ccc] bg-white pt-1 leading-[26px]"
      >
        +
      </button>
      <button type="button" aria-label="Zoom out" className="h-[30px] w-[30px] rounded-b-sm bg-white pt-1 leading-[26px]">
        −
      </button>
    </div>

    <div className="absolute bottom-0 right-0 flex h-[17px] items-center bg-white/80 px-[5px] text-[12px] leading-4 text-[#333]">
      <a href="#leaflet" className="flex items-center gap-[3px] text-[#0078a8]">
        <svg width="12" height="8" viewBox="0 0 12 8" aria-hidden="true">
          <path fill="#4c7be1" d="M0 0h12v4H0z" />
          <path fill="#ffd500" d="M0 4h12v4H0z" />
        </svg>
        Leaflet
      </a>
      <span className="whitespace-pre"> | © </span>
      <a href="#openstreetmap" className="text-[#0078a8]">
        OpenStreetMap
      </a>
    </div>
  </section>
);

const App: React.FC = () => {
  const [role, setRole] = useState("admin");

  return (
    <div className="flex h-screen flex-col bg-[#08070d] font-['Liberation_Sans',Arial,sans-serif] text-[16px] text-black">
      <BrowserBar />
      <main className="ml-px flex min-h-0 flex-1 gap-5 bg-white pb-[17px] pl-5 pr-[19px] pt-5">
        <section className="flex min-w-0 flex-1 flex-col pb-5">
          <h1 className="mt-5 text-center text-[32px] font-bold leading-[38px] text-[#333]">Städteverwaltung</h1>
          <div className="mt-[22px] flex h-[18px] items-center pl-[5px] leading-[18px]">
            <label className="flex items-center gap-[3px]">
              <input
                type="radio"
                name="role"
                checked={role === "admin"}
                onChange={() => setRole("admin")}
                className={radioClass}
              />
              Administrator
            </label>
            <label className="ml-[5px] flex items-center gap-[3px]">
              <input
                type="radio"
                name="role"
                checked={role === "guest"}
                onChange={() => setRole("guest")}
                className={radioClass}
              />
              Gast
            </label>
          </div>
          <div className="grid min-h-0 flex-1 grid-cols-[469fr_420fr] gap-5">
            <div className="flex min-h-0 min-w-0 flex-col">
              <h2 className="mb-[10px] text-[24px] font-bold leading-[28px]">Stadtliste</h2>
              <input
                type="text"
                placeholder="Stadt suchen..."
                aria-label="Stadt suchen"
                className={`${inputClass} mb-[10px] shrink-0`}
              />
              <CityList />
            </div>
            <div className="min-w-0">
              <h2 className="mb-[10px] text-[24px] font-bold leading-[28px]">Neue Stadt hinzufügen</h2>
              <CityForm />
            </div>
          </div>
        </section>
        <CityMap />
      </main>
    </div>
  );
};

export default App;
